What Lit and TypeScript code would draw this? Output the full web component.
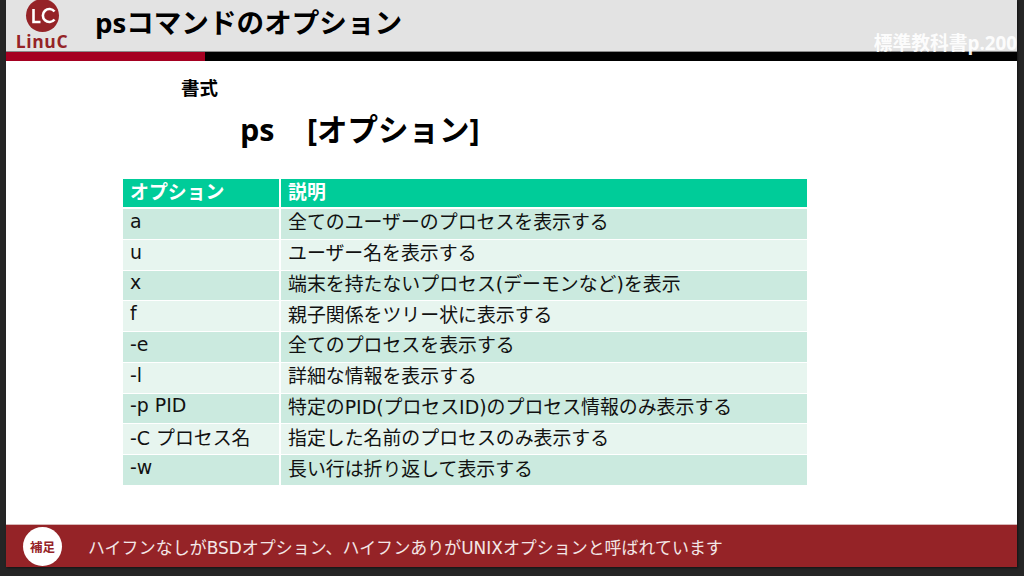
import { LitElement, html, css } from "lit";
import { customElement } from "lit/decorators.js";

const rows: [string, string][] = [
  ["a", "全てのユーザーのプロセスを表示する"],
  ["u", "ユーザー名を表示する"],
  ["x", "端末を持たないプロセス(デーモンなど)を表示"],
  ["f", "親子関係をツリー状に表示する"],
  ["-e", "全てのプロセスを表示する"],
  ["-l", "詳細な情報を表示する"],
  ["-p PID", "特定のPID(プロセスID)のプロセス情報のみ表示する"],
  ["-C プロセス名", "指定した名前のプロセスのみ表示する"],
  ["-w", "長い行は折り返して表示する"],
];

@customElement("app-root")
export class AppRoot extends LitElement {
  static styles = css`
    :host {
      display: block;
      width: 1024px;
      height: 576px;
      background: #252525;
      overflow: hidden;
      font-family: "Open Sans", "Noto Sans CJK JP", sans-serif;
      color: #000;
    }
    .slide {
      margin-left: 6px;
      width: 1011px;
      height: 567px;
      background: #fff;
      display: flex;
      flex-direction: column;
      box-shadow: 1px 1px 2px rgba(0, 0, 0, 0.5);
      overflow: hidden;
    }
    .head {
      height: 51px;
      flex: none;
      background: #e3e3e3;
      display: flex;
      align-items: flex-start;
      position: relative;
      border-bottom: 1px solid #8a8a8a;
    }
    .logo {
      width: 66px;
      margin-left: 9px;
      flex: none;
      display: block;
    }
    .title {
      margin: 1px 0 0 14px;
      font-size: 27.6px;
      line-height: 42px;
      font-weight: 700;
      white-space: nowrap;
    }
    .ref {
      position: absolute;
      right: 0;
      top: 31px;
      font-size: 18.8px;
      line-height: 24px;
      font-weight: 700;
      color: #fff;
      opacity: 0.92;
      white-space: nowrap;
    }
    .bar {
      flex: none;
      height: 9px;
      background: #000;
      display: flex;
    }
    .bar i {
      display: block;
      width: 199px;
      background: #a50021;
    }
    .main {
      flex: 1;
      display: flex;
      flex-direction: column;
      min-height: 0;
    }
    .fmt {
      margin: 16px 0 0 175px;
      font-size: 18.5px;
      line-height: 22px;
      font-weight: 700;
    }
    .cmd {
      margin: 10px 0 0 234px;
      font-size: 30.5px;
      line-height: 40px;
      font-weight: 700;
      white-space: pre;
    }
    .cmd span {
      margin-right: 2px;
    }
    .table {
      margin: 30px 0 0 117px;
      width: 684px;
      display: grid;
      grid-template-columns: 157px 1fr;
      grid-template-rows: 30px repeat(9, 30.78px);
    }
    .cell {
      display: flex;
      align-items: center;
      padding: 0 0 6px 7px;
      font-family: "DejaVu Sans", "Noto Sans CJK JP", sans-serif;
      font-size: 18.9px;
      color: #111;
      white-space: nowrap;
      border-right: 1px solid #fff;
      border-bottom: 1px solid #fff;
      box-sizing: border-box;
    }
    .cell.second {
      padding-left: 7px;
      border-right: 0;
      border-left: 1px solid #fff;
    }
    .cell.hd {
      background: #00cc99;
      color: #fff;
      font-family: "Open Sans", "Noto Sans CJK JP", sans-serif;
      font-weight: 700;
      padding-bottom: 5px;
      border-bottom: 2px solid #fff;
    }
    .odd {
      background: #cbeadf;
    }
    .even {
      background: #e7f5ef;
    }
    .foot {
      flex: none;
      height: 42px;
      background: #952327;
      border-top: 1px solid #d8b8b8;
      display: flex;
      align-items: center;
      color: #f3e6e6;
      font-family: "DejaVu Sans", "Noto Sans CJK JP", sans-serif;
      font-size: 16.97px;
      white-space: nowrap;
    }
    .badge {
      width: 39px;
      height: 39px;
      margin: 0 26px 0 17px;
      border-radius: 50%;
      background: #fff;
      color: #952327;
      font-size: 12.5px;
      font-weight: 700;
      display: flex;
      align-items: center;
      justify-content: center;
      flex: none;
    }
  `;

  render() {
    return html`
      <div class="slide">
        <div class="head">
          <svg class="logo" viewBox="0 0 66 51" aria-label="LinuC">
            <circle cx="27.5" cy="15.5" r="16.5" fill="#952327"></circle>
            <path d="M18.5 9v13h7" fill="none" stroke="#fff" stroke-width="2.6"></path>
            <path d="M39.5 11.5a6.5 6.5 0 1 0 0 8" fill="none" stroke="#fff" stroke-width="2.6"></path>
            <text x="27" y="47.5" text-anchor="middle" font-family="Open Sans, sans-serif" font-size="17.5" font-weight="700" fill="#952327" letter-spacing="0.6">LinuC</text>
          </svg>
          <div class="title">psコマンドのオプション</div>
          <div class="ref">標準教科書p.200</div>
        </div>
        <div class="bar"><i></i></div>
        <div class="main">
          <div class="fmt">書式</div>
          <div class="cmd"><span>ps</span>　[オプション]</div>
          <div class="table">
            <div class="cell hd">オプション</div>
            <div class="cell second hd">説明</div>
            ${rows.map(
              ([a, b], i) => html`
                <div class="cell ${i % 2 ? "even" : "odd"}">${a}</div>
                <div class="cell second ${i % 2 ? "even" : "odd"}">${b}</div>
              `
            )}
          </div>
        </div>
        <div class="foot">
          <div class="badge">補足</div>
          <div>ハイフンなしがBSDオプション、ハイフンありがUNIXオプションと呼ばれています</div>
        </div>
      </div>
    `;
  }
}
